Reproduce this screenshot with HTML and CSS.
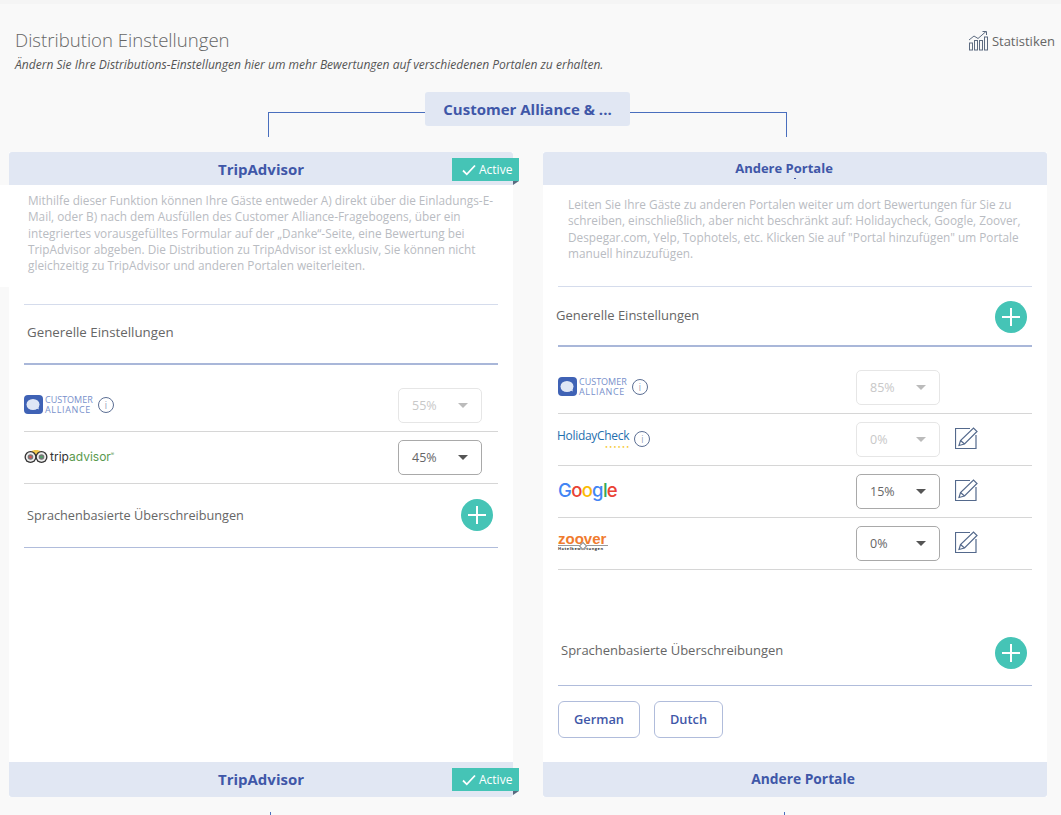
FILE: index.html
```html
<!DOCTYPE html>
<html lang="de">
<head>
<meta charset="utf-8">
<title>Distribution Einstellungen</title>
<link rel="stylesheet" href="styles.css">
</head>
<body>
<div class="page">
  <header class="top">
    <div>
      <h1>Distribution Einstellungen</h1>
      <p class="sub">Ändern Sie Ihre Distributions-Einstellungen hier um mehr Bewertungen auf verschiedenen Portalen zu erhalten.</p>
    </div>
    <a class="stats">
      <svg width="21" height="21" viewBox="0 0 21 21" fill="none" stroke="#5d6b80" stroke-width="1"><rect x="1.5" y="13" width="3" height="7"/><rect x="6.5" y="10.5" width="3" height="9.5"/><rect x="11.5" y="10.5" width="3" height="9.5"/><rect x="16.5" y="7" width="3" height="13"/><path d="M1 10l5-4 4 2.500 8-7M14.500 1.500h4v3.500"/></svg>
      Statistiken
    </a>
  </header>

  <div class="tree">
    <span class="branch"></span>
    <div class="pill">Customer Alliance &amp; ...</div>
    <span class="branch branch-r"></span>
  </div>

  <main class="cards">
    <section class="card">
      <div class="card-head card-head-l">TripAdvisor<span class="badge"><svg width="14" height="12" viewBox="0 0 14 12" fill="none" stroke="#fff" stroke-width="1.800"><path d="M1 6.500l3.800 3.800L13 1.500"/></svg>Active</span></div>
      <div class="card-body">
        <p class="desc desc-l">Mithilfe dieser Funktion können Ihre Gäste entweder A) direkt über die Einladungs-E-Mail, oder B) nach dem Ausfüllen des Customer Alliance-Fragebogens, über ein integriertes vorausgefülltes Formular auf der „Danke“-Seite, eine Bewertung bei TripAdvisor abgeben. Die Distribution zu TripAdvisor ist exklusiv, Sie können nicht gleichzeitig zu TripAdvisor und anderen Portalen weiterleiten.</p>
        <div class="section-head general-l">Generelle Einstellungen</div>
        <div class="rows rows-l">
          <div class="row">
            <div class="brand">
              <span class="ca"><span class="ca-mark"><svg width="19" height="19" viewBox="0 0 19 19"><rect width="19" height="19" rx="4" fill="#3f62b5"/><ellipse cx="9" cy="9.500" rx="6.500" ry="5.500" fill="#dfe6f5"/><path d="M12 13l3 1.500-1-3z" fill="#dfe6f5"/></svg></span><span class="ca-text">CUSTOMER
ALLIANCE</span></span>
              <span class="info">i</span>
            </div>
            <div class="select is-off"><span>55%</span><i></i></div>
          </div>
          <div class="row">
            <div class="brand">
              <span class="ta">
                <svg width="24" height="15" viewBox="0 0 24 15"><path d="M7 2.500C9 .5 15 .5 17 2.500L12 7z" fill="#f2c84b"/><circle cx="6.500" cy="8" r="6" fill="#333"/><circle cx="17.500" cy="8" r="6" fill="#333"/><circle cx="6.500" cy="8" r="4.700" fill="#eee"/><circle cx="17.500" cy="8" r="4.700" fill="#eee"/><circle cx="6.500" cy="8" r="2.800" fill="#777"/><circle cx="17.500" cy="8" r="2.800" fill="#777"/><circle cx="6.500" cy="8" r="1.300" fill="#d9534f"/><circle cx="17.500" cy="8" r="1.300" fill="#4fa36a"/></svg>
                <span class="ta-text">trip<b>advisor</b><sup>®</sup></span>
              </span>
            </div>
            <div class="select"><span>45%</span><i></i></div>
          </div>
        </div>
        <div class="section-head lang-l">Sprachenbasierte Überschreibungen<span class="plus"></span></div>
      </div>
      <div class="card-foot card-foot-l">TripAdvisor<span class="badge"><svg width="14" height="12" viewBox="0 0 14 12" fill="none" stroke="#fff" stroke-width="1.800"><path d="M1 6.500l3.800 3.800L13 1.500"/></svg>Active</span></div>
      <span class="tick"></span>
    </section>

    <section class="card">
      <div class="card-head card-head-r">Andere Portale</div>
      <div class="card-body">
        <p class="desc desc-r">Leiten Sie Ihre Gäste zu anderen Portalen weiter um dort Bewertungen für Sie zu schreiben, einschließlich, aber nicht beschränkt auf: Holidaycheck, Google, Zoover, Despegar.com, Yelp, Tophotels, etc. Klicken Sie auf "Portal hinzufügen" um Portale manuell hinzuzufügen.</p>
        <div class="section-head general-r">Generelle Einstellungen<span class="plus"></span></div>
        <div class="rows rows-r">
          <div class="row">
            <div class="brand">
              <span class="ca"><span class="ca-mark"><svg width="19" height="19" viewBox="0 0 19 19"><rect width="19" height="19" rx="4" fill="#3f62b5"/><ellipse cx="9" cy="9.500" rx="6.500" ry="5.500" fill="#dfe6f5"/><path d="M12 13l3 1.500-1-3z" fill="#dfe6f5"/></svg></span><span class="ca-text">CUSTOMER
ALLIANCE</span></span>
              <span class="info">i</span>
            </div>
            <div class="select is-off"><span>85%</span><i></i></div>
            <span class="edit-slot"></span>
          </div>
          <div class="row">
            <div class="brand">
              <span class="hc">HolidayCheck<span class="hc-dots">● ● ● ● ● ●</span></span>
              <span class="info">i</span>
            </div>
            <div class="select is-off"><span>0%</span><i></i></div>
            <span class="edit-slot"><svg class="edit" width="23" height="23" viewBox="0 0 23 23" fill="none" stroke="#54698c" stroke-width="1.200"><path d="M21 8V21.500H.5V1.500H15"/><path d="M4 18.500l1.500-5L18.500 1l3.500 3.500L9.500 17zM5.500 13.500l4 3.500"/></svg></span>
          </div>
          <div class="row">
            <div class="brand"><span class="google"><b class="g-b">G</b><b class="g-r">o</b><b class="g-y">o</b><b class="g-b">g</b><b class="g-g">l</b><b class="g-r">e</b></span></div>
            <div class="select"><span>15%</span><i></i></div>
            <span class="edit-slot"><svg class="edit" width="23" height="23" viewBox="0 0 23 23" fill="none" stroke="#54698c" stroke-width="1.200"><path d="M21 8V21.500H.5V1.500H15"/><path d="M4 18.500l1.500-5L18.500 1l3.500 3.500L9.500 17zM5.500 13.500l4 3.500"/></svg></span>
          </div>
          <div class="row">
            <div class="brand"><span class="zoover"><b>zoover</b><small>Hotelbewertungen</small></span></div>
            <div class="select"><span>0%</span><i></i></div>
            <span class="edit-slot"><svg class="edit" width="23" height="23" viewBox="0 0 23 23" fill="none" stroke="#54698c" stroke-width="1.200"><path d="M21 8V21.500H.5V1.500H15"/><path d="M4 18.500l1.500-5L18.500 1l3.500 3.500L9.500 17zM5.500 13.500l4 3.500"/></svg></span>
          </div>
        </div>
        <div class="section-head lang-r">Sprachenbasierte Überschreibungen<span class="plus"></span></div>
        <div class="langs"><button class="lang">German</button><button class="lang">Dutch</button></div>
      </div>
      <div class="card-foot card-foot-r">Andere Portale</div>
      <span class="tick tick-r"></span>
    </section>
  </main>
</div>
</body>
</html>
```

FILE: styles.css
```css
* { box-sizing: border-box; }
html, body { margin: 0; height: 815px; overflow: hidden; }
body { background: #f9f9f9; font-family: "Open Sans", "Liberation Sans", sans-serif; color: #555; }
.page { border-top: 4px solid #f5f5f5; padding: 0 14px 0 9px; }

.top { display: flex; justify-content: space-between; align-items: flex-start; padding: 22px 0 0 6px; height: 88px; margin-right: -8px; }
h1 { margin: 0; font-size: 18.600px; font-weight: 300; line-height: 28px; color: #666; }
.sub { margin: 2px 0 0; font-size: 12.050px; line-height: 18px; font-style: italic; color: #555; }
.stats { display: flex; align-items: center; gap: 3px; font-size: 13px; line-height: 20px; color: #666; margin-top: 4px; }

.tree { display: flex; justify-content: center; align-items: flex-start; height: 60px; margin-right: 1px; }
.pill { width: 205px; height: 34px; background: #e1e7f3; border-radius: 3px; text-align: center; font-size: 15px; font-weight: 700; line-height: 35px; color: #3f57a8; }
.branch { width: 157px; height: 25px; margin-top: 20px; border-top: 1px solid #4a6fbe; border-left: 1px solid #4a6fbe; }
.branch-r { border-left: 0; border-right: 1px solid #4a6fbe; }

.cards { display: grid; grid-template-columns: 504px 504px; gap: 30px; }
.card { position: relative; height: 645px; display: flex; flex-direction: column; background: #fff; }
.card-head, .card-foot { position: relative; flex: none; text-align: center; background: #e1e7f3; font-weight: 700; color: #3f57a8; }
.card-head { height: 33px; border-radius: 3px 3px 0 0; }
.card-head-l { font-size: 15px; line-height: 35px; }
.card-head-r { font-size: 13px; line-height: 32px; padding-right: 22px; }
.card-head-r::after { content: ""; position: absolute; left: 251px; top: 26px; width: 2px; height: 1px; background: #3f57a8; }
.card-foot { height: 35px; border-radius: 0 0 3px 3px; font-size: 14px; line-height: 34px; }
.card-foot-l { font-size: 15px; line-height: 35px; }
.card-foot-r { padding-left: 16px; font-size: 13.800px; }
.card-body { flex: 1; display: flex; flex-direction: column; min-height: 0; }

.badge { position: absolute; top: 6px; right: -6px; display: flex; align-items: center; gap: 3px; width: 67px; height: 23px; padding-left: 10px; background: #45c4b6; color: #fff; font-size: 12px; font-weight: 400; line-height: 23px; }
.badge::after { content: ""; position: absolute; right: 0; bottom: -4px; border-left: 6px solid #5a6a80; border-bottom: 4px solid transparent; }

.desc { margin: 0; font-size: 11.800px; line-height: 16.300px; color: #b9bcc2; }
.desc-l { margin-left: -9px; width: 513px; height: 102px; padding: 7px 19px 0 28px; background: #fff; }
.desc-r { height: 101px; padding: 11px 18px 0 25px; }

.section-head { position: relative; display: flex; align-items: center; justify-content: space-between; font-size: 13px; color: #666; }
.general-l { height: 61px; margin: 17px 15px 0; padding: 0 3px 5px; font-size: 13.300px; border-top: 1px solid #d5dcec; border-bottom: 2px solid #a9b7d9; }
.general-r { height: 61px; margin: 0 15px; padding: 0 4px 2px 0; text-indent: -2px; border-top: 1px solid #d5dcec; border-bottom: 2px solid #a9b7d9; }
.lang-l { height: 64px; margin: 0 15px; padding: 0 3px 2px; font-size: 12.700px; border-bottom: 1px solid #b0bcdb; }
.lang-r { height: 64px; margin: 52px 15px 0; padding: 0 4px 8px 3px; border-bottom: 1px solid #b0bcdb; }
.plus { position: relative; flex: none; width: 32px; height: 32px; border-radius: 50%; background: #45c4b6; }
.plus::before, .plus::after { content: ""; position: absolute; background: #fff; }
.plus::before { left: 7px; right: 7px; top: 15px; height: 2px; }
.plus::after { top: 7px; bottom: 7px; left: 15px; width: 2px; }
.general-r .plus { margin-top: 3px; margin-right: 1px; }
.lang-l .plus { margin-right: 2px; }
.lang-r .plus { margin-right: 1px; margin-top: 6px; }

.rows { margin: 15px 15px 0; }
.row { display: flex; align-items: center; height: 52px; border-bottom: 1px solid #d6d6d6; }
.brand { flex: 1; display: flex; align-items: center; gap: 5px; margin-bottom: 2px; }
.rows-l .select { margin-right: 16px; }
.edit-slot { width: 92px; flex: none; padding-left: 15px; display: flex; align-items: center; }
.edit { margin-top: -3px; }

.select { display: flex; align-items: center; justify-content: space-between; flex: none; width: 84px; height: 35px; padding: 0 13px 0 13px; background: #fff; border: 1px solid #a9a9a9; border-radius: 5px; font-size: 12.500px; color: #666; }
.select i { border-left: 5px solid transparent; border-right: 5px solid transparent; border-top: 5px solid #555; }
.select.is-off { border-color: #e6e6e6; color: #c8c8c8; }
.select.is-off i { border-top-color: #bbb; }

.info { display: flex; align-items: center; justify-content: center; width: 16px; height: 16px; border: 1px solid #5c6f94; border-radius: 50%; font-size: 10px; font-weight: 300; line-height: 1; color: #5c6f94; }

.ca { display: flex; align-items: center; gap: 2px; }
.ca-mark { display: flex; }
.ca-text { display: block; white-space: pre-line; font-size: 9px; line-height: 9.500px; letter-spacing: .65px; color: #7890cb; font-weight: 400; }
.ca-text::first-line { letter-spacing: 0; }

.ta { display: flex; align-items: center; gap: 2px; }
.ta-text { font-size: 12px; font-weight: 400; color: #333; font-family: "Inter", sans-serif; }
.ta-text b { font-weight: 400; color: #5a9a4e; }
.ta-text sup { font-size: 5px; color: #5a9a4e; }

.hc { position: relative; font-size: 12px; line-height: 16px; color: #1f6fae; letter-spacing: -.3px; padding-bottom: 5px; margin-left: -1px; }
.hc-dots { position: absolute; right: 0; bottom: -1px; font-size: 4px; line-height: 6px; letter-spacing: .4px; color: #f5c518; white-space: nowrap; }

.google { font-family: "Inter", sans-serif; font-size: 18.500px; line-height: 22px; letter-spacing: -.7px; margin-bottom: 1px; }
.google b { font-weight: 500; }
.g-b { color: #4285f4; } .g-r { color: #ea4335; } .g-y { color: #fbbc05; } .g-g { color: #34a853; }

.zoover { position: relative; display: flex; flex-direction: column; width: 50px; margin-bottom: 2px; }
.zoover b { font-family: "Liberation Sans", sans-serif; font-size: 15px; line-height: 13px; font-weight: 700; color: #f07b2e; }
.zoover small { border-top: 1px solid #999; font-size: 4px; line-height: 6px; font-weight: 700; color: #333; letter-spacing: .5px; white-space: nowrap; }
.zoover::after { content: ""; position: absolute; left: 22px; top: 11px; width: 4px; height: 4px; background: #fff; border: 1px solid #888; transform: rotate(45deg); }

.langs { display: flex; gap: 14px; margin: 15px 15px 0; }
.lang { height: 37px; padding: 0 15px 2px; background: #fff; border: 1px solid #b0bcdb; border-radius: 6px; font-family: inherit; font-size: 12.800px; font-weight: 600; color: #3f57a8; }

.tick { position: absolute; left: 261px; bottom: -18px; width: 1px; height: 3px; background: #4a6fbe; }
.tick-r { left: 241px; }
```
